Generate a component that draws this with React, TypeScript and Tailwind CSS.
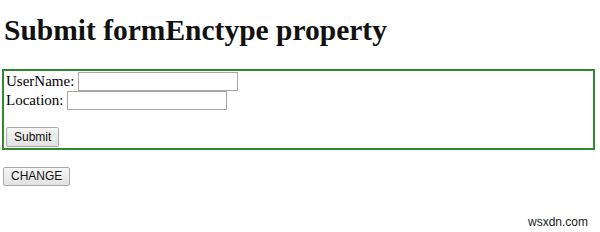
export default function App() {
  return (
    <div className="min-h-[232px] w-[600px] bg-white pt-[13px] text-black font-['Liberation_Serif','Times_New_Roman',serif]">
      <div className="pl-[2px] pr-[5px]">
        <h1 className="pl-[2px] text-[29.5px] font-bold leading-[34px] text-[#111]">
          Submit formEnctype property
        </h1>

        <form
          className="mt-[22px] border-2 border-[#2f8a2f] px-[2px] pt-[1px] pb-[1px] text-[15px]"
          onSubmit={(e) => e.preventDefault()}
        >
          <div className="flex h-[19px] items-center">
            <span className="leading-[19px]">UserName:</span>
            <input type="text" className="ml-[4px] h-[19px] w-[160px] border border-[#a7a7a7] bg-white outline-none" />
          </div>
          <div className="flex h-[19px] items-center">
            <span className="leading-[19px]">Location:</span>
            <input type="text" className="ml-[4px] h-[19px] w-[160px] border border-[#a7a7a7] bg-white outline-none" />
          </div>
          <button
            type="submit"
            className="mt-[17px] block h-[20px] rounded-[2px] border border-[#a9a9a9] bg-gradient-to-b from-[#f6f6f6] to-[#e2e2e2] px-[7px] font-['Liberation_Sans',Arial,sans-serif] text-[12px] leading-[18px] text-[#111]"
          >
            Submit
          </button>
        </form>

        <button
          type="button"
          className="mt-[17px] ml-[1px] block h-[19px] rounded-[2px] border border-[#a9a9a9] bg-gradient-to-b from-[#f6f6f6] to-[#e2e2e2] px-[7px] font-['Liberation_Sans',Arial,sans-serif] text-[12px] leading-[17px] text-[#111]"
        >
          CHANGE
        </button>
      </div>

      <div className="mt-[29px] flex justify-end pr-[12px]">
        <span className="font-['Liberation_Sans',Arial,sans-serif] text-[12px] leading-[14px] text-[#222]">wsxdn.com</span>
      </div>
    </div>
  );
}
